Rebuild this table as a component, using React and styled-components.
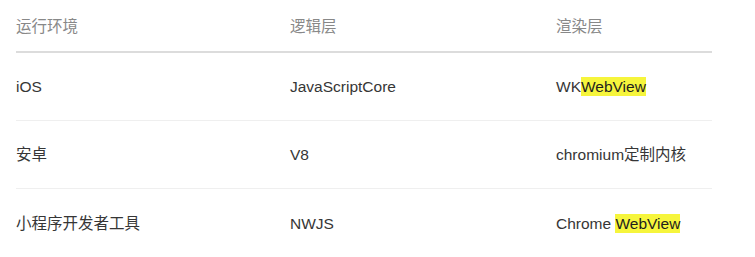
import React from "react";
import styled, { createGlobalStyle } from "styled-components";

const Global = createGlobalStyle`
  html, body { margin: 0; padding: 0; background: #fff; }
  body {
    font-family: "Liberation Sans", "Noto Sans CJK SC", sans-serif;
    -webkit-font-smoothing: antialiased;
  }
`;

const Page = styled.div`
  width: 755px;
  height: 257px;
  padding: 1px 43px 0 16px;
  box-sizing: border-box;
  overflow: hidden;
`;

const Table = styled.div`
  width: 696px;
  display: grid;
  grid-template-columns: 274px 266px 1fr;
`;

const Cell = styled.div`
  display: flex;
  align-items: center;
  font-size: 15.5px;
  line-height: 18px;
  white-space: nowrap;
  color: ${(p) => (p.$head ? "#888888" : "#363636")};
  height: ${(p) => (p.$head ? "52px" : "68px")};
  padding-top: ${(p) => (p.$head ? "2px" : "1px")};
  box-sizing: border-box;
  border-bottom: ${(p) =>
    p.$head ? "2px solid #dcdcdc" : p.$last ? "none" : "1px solid #efefef"};
`;

const Text = styled.span`
  white-space: pre;
`;

const Mark = styled.mark`
  background: #f6f53c;
  color: #1e1e1e;
  padding: 1px 0;
`;

const rows = [
  ["iOS", "JavaScriptCore", <>WK<Mark>WebView</Mark></>],
  ["安卓", "V8", "chromium定制内核"],
  ["小程序开发者工具", "NWJS", <>Chrome <Mark>WebView</Mark></>],
];

export default function App() {
  return (
    <>
      <Global />
      <Page>
        <Table>
          <Cell $head><Text>运行环境</Text></Cell>
          <Cell $head><Text>逻辑层</Text></Cell>
          <Cell $head><Text>渲染层</Text></Cell>
          {rows.map((r, i) =>
            r.map((c, j) => (
              <Cell key={`${i}-${j}`} $last={i === rows.length - 1}>
                <Text>{c}</Text>
              </Cell>
            ))
          )}
        </Table>
      </Page>
    </>
  );
}
